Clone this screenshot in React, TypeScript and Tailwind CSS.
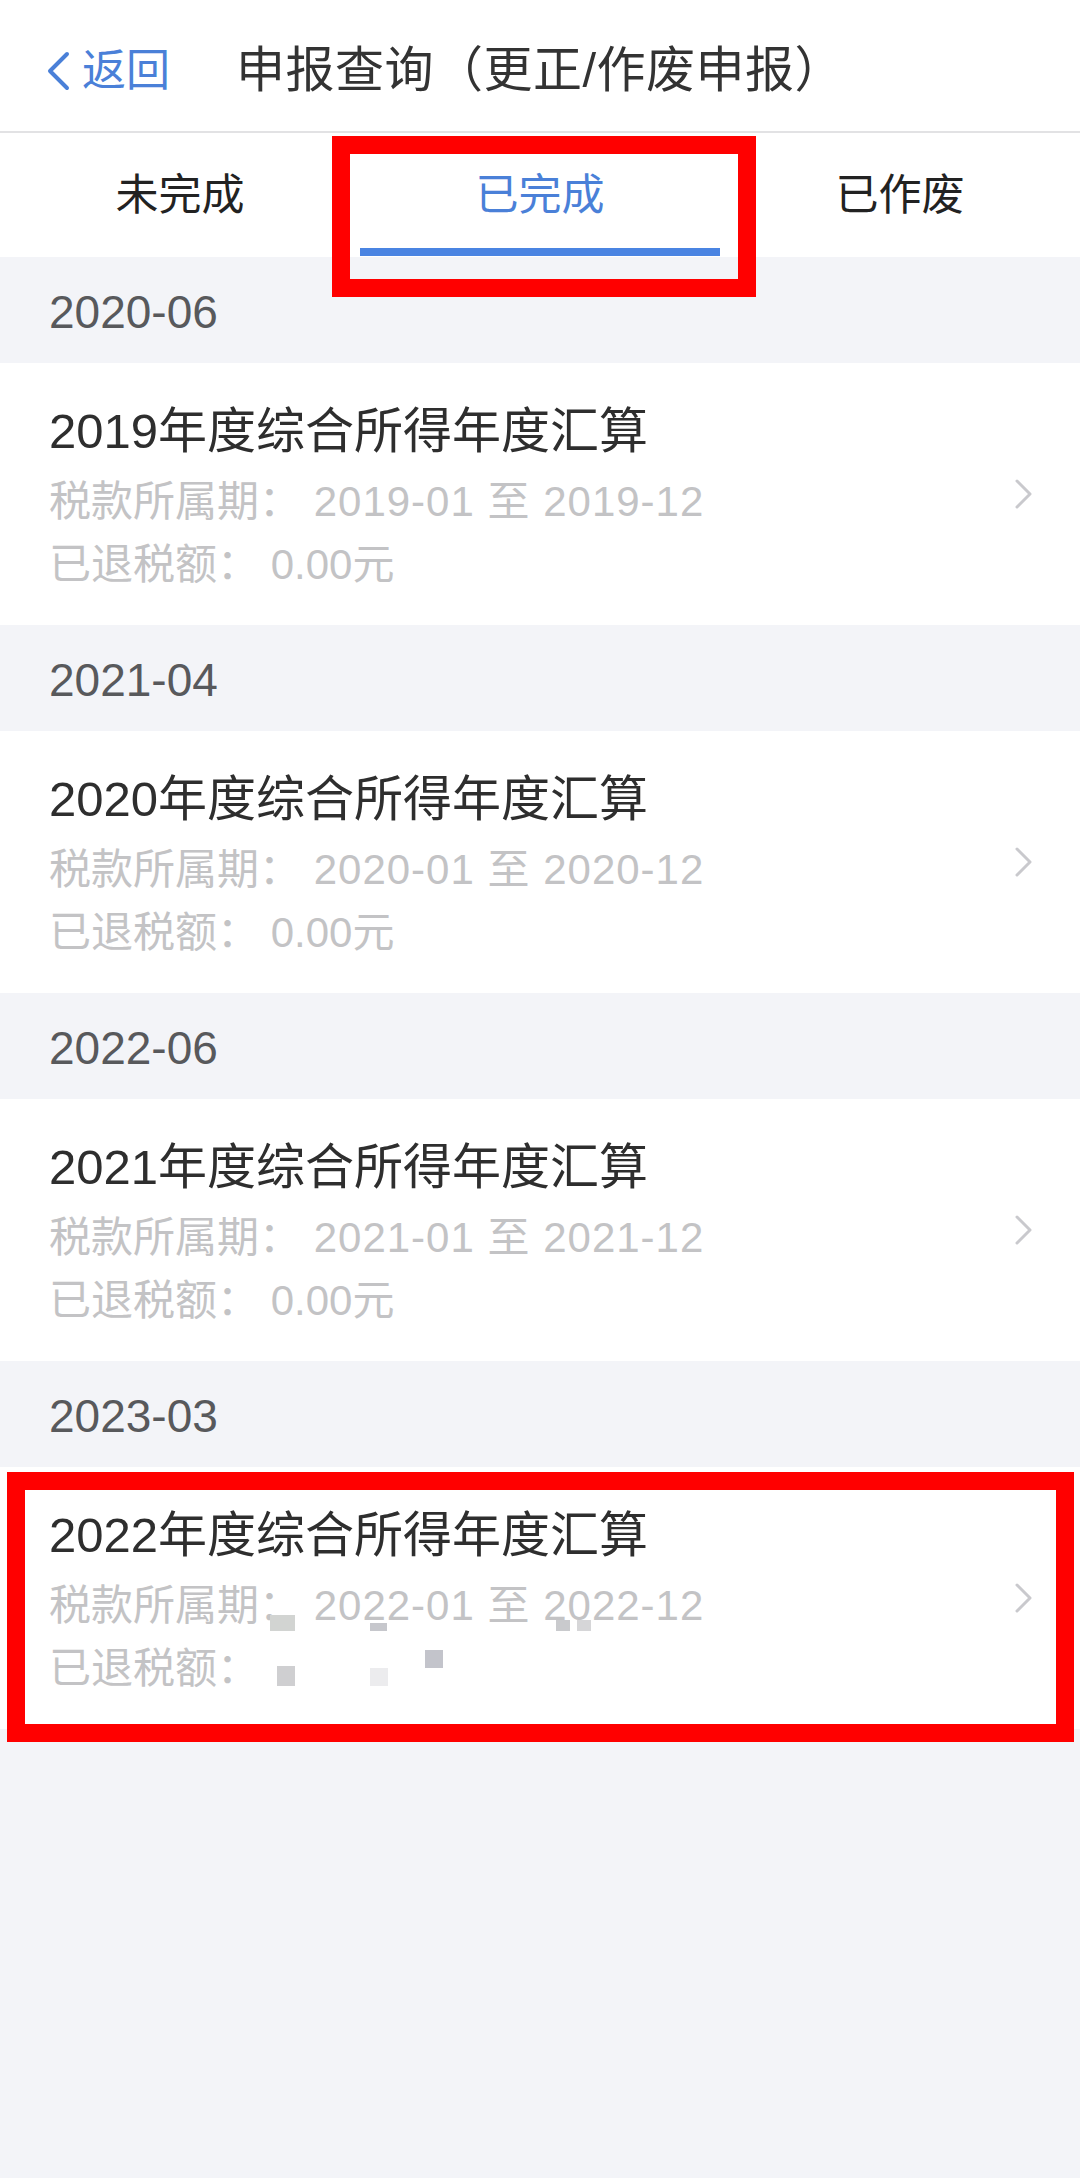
import React from "react";

const FONT = { fontFamily: '"Liberation Sans", "Noto Sans CJK SC", sans-serif' };

type Item = { date: string; year: string; refund: string | null };

const items: Item[] = [
  { date: "2020-06", year: "2019", refund: "0.00元" },
  { date: "2021-04", year: "2020", refund: "0.00元" },
  { date: "2022-06", year: "2021", refund: "0.00元" },
  { date: "2023-03", year: "2022", refund: null },
];

function Chevron() {
  return (
    <svg width="20" height="32" viewBox="0 0 20 32" fill="none">
      <polyline points="3,3 16,16 3,29" stroke="#c9c9cd" strokeWidth="3" strokeLinecap="round" strokeLinejoin="round" />
    </svg>
  );
}

function Mosaic() {
  return (
    <div className="pointer-events-none absolute inset-0">
      <div className="absolute left-[270px] top-[148px] w-[25px] h-[16px] bg-[#d2d4d2]" />
      <div className="absolute left-[370px] top-[156px] w-[17px] h-[8px] bg-[#c6c7cc]" />
      <div className="absolute left-[556px] top-[153px] w-[14px] h-[11px] bg-[#c9cacd]" />
      <div className="absolute left-[577px] top-[153px] w-[14px] h-[11px] bg-[#d6d6d8]" />
      <div className="absolute left-[277px] top-[199px] w-[18px] h-[20px] bg-[#cfcfd1]" />
      <div className="absolute left-[370px] top-[201px] w-[18px] h-[18px] bg-[#ececee]" />
      <div className="absolute left-[425px] top-[183px] w-[18px] h-[18px] bg-[#c3c4cb]" />
    </div>
  );
}

export default function App() {
  return (
    <div className="relative w-[1080px] min-h-[2178px] bg-[#f3f4f8] overflow-hidden" style={FONT}>
      {/* Header */}
      <div className="h-[133px] bg-white border-b-2 border-[#e2e2e4] flex items-center pt-[10px]">
        <div className="flex items-center ml-[45px] text-[#4a80d8]">
          <svg width="26" height="40" viewBox="0 0 26 40" fill="none">
            <polyline points="22,3 5,20 22,37" stroke="#4a80d8" strokeWidth="4" strokeLinecap="round" strokeLinejoin="round" />
          </svg>
          <span className="ml-[11px] text-[44px] leading-none">返回</span>
        </div>
        <div className="ml-[66px] text-[49px] leading-none tracking-[0.5px] text-[#333333]">申报查询（更正/作废申报）</div>
      </div>

      {/* Tabs */}
      <div className="h-[124px] bg-white grid grid-cols-3">
        <div className="flex items-center justify-center text-[43px] text-[#222222]">未完成</div>
        <div className="relative flex items-center justify-center text-[43px] text-[#4a80d8]">
          已完成
          <div className="absolute left-0 right-0 bottom-[1px] h-[8px] bg-[#4a84e2]" />
        </div>
        <div className="flex items-center justify-center text-[43px] text-[#222222]">已作废</div>
      </div>

      {/* List */}
      {items.map((it) => (
        <div key={it.date}>
          <div className="h-[106px] flex items-center pl-[49px] pt-[4px] text-[46px] text-[#58595c]">{it.date}</div>
          <div className="relative h-[262px] bg-white flex items-center pl-[49px] pr-[46px]">
            <div className="flex-1 pt-[6px]">
              <div className="text-[49px] leading-[64px] text-[#2e2e2e]">{it.year}年度综合所得年度汇算</div>
              <div className="mt-[7px] text-[42px] leading-[63px] text-[#c3c3c5] whitespace-pre">
                税款所属期：<span className="tracking-[1px]">{` ${it.year}-01 至 ${it.year}-12`}</span>
              </div>
              <div className="text-[42px] leading-[63px] text-[#c3c3c5] whitespace-pre">
                {`已退税额： ${it.refund ?? ""}`}
              </div>
            </div>
            <Chevron />
            {it.refund === null && <Mosaic />}
          </div>
        </div>
      ))}

      {/* Red annotation boxes */}
      <div className="absolute left-[332px] top-[136px] w-[424px] h-[161px] border-[18px] border-[#ff0000]" />
      <div className="absolute left-[7px] top-[1472px] w-[1067px] h-[270px] border-[18px] border-[#ff0000]" />
    </div>
  );
}
